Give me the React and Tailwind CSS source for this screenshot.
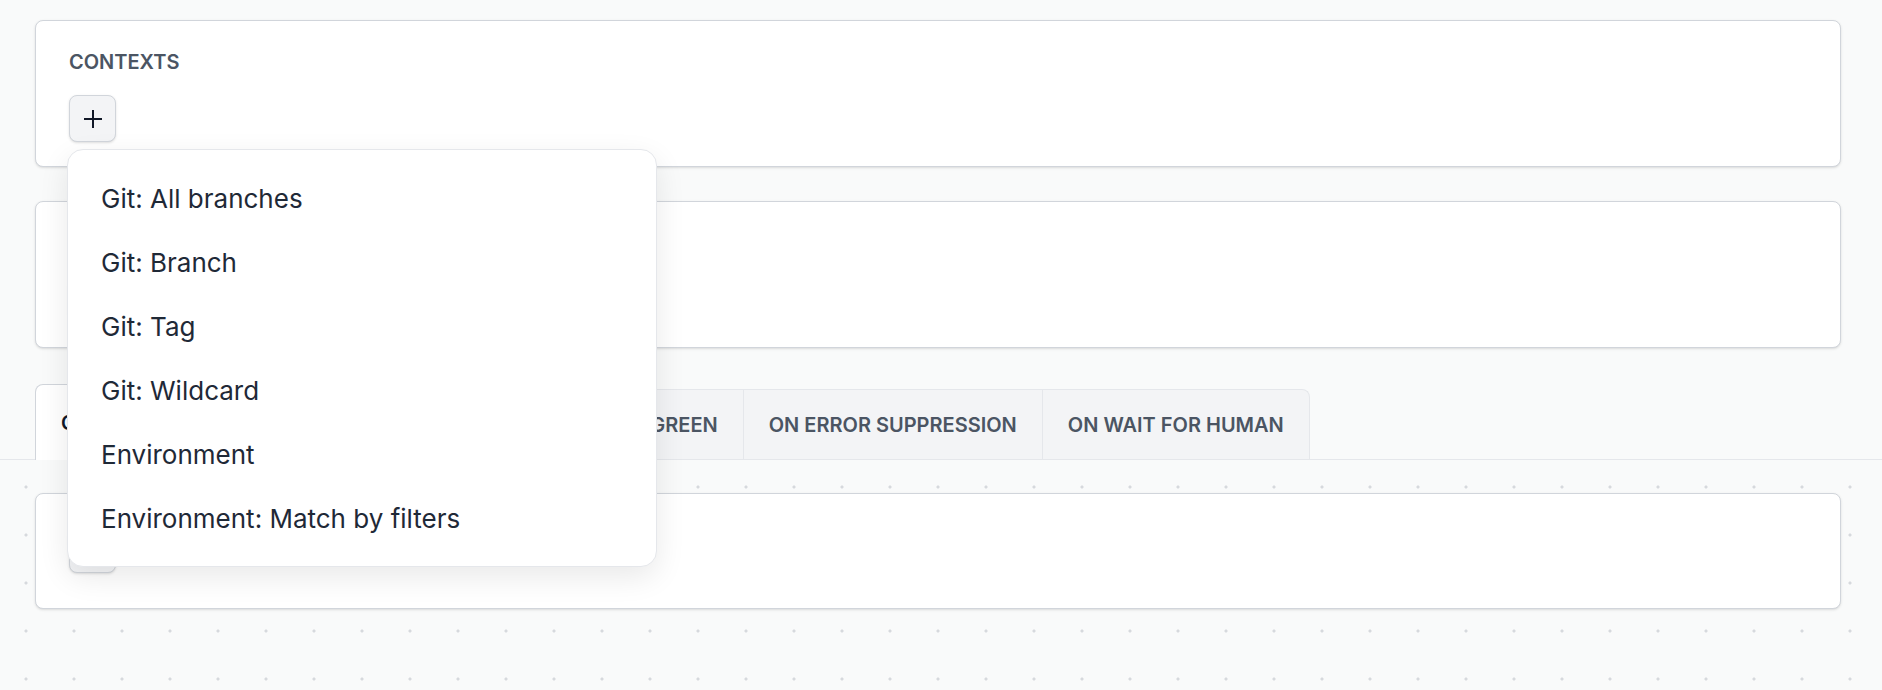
import React from 'react';

const menuItems = [
  'Git: All branches',
  'Git: Branch',
  'Git: Tag',
  'Git: Wildcard',
  'Environment',
  'Environment: Match by filters',
];

const tabs = [
  { label: 'CONDITIONS', active: true },
  { label: 'ON TURNED RED' },
  { label: 'ON TURNED GREEN' },
  { label: 'ON ERROR SUPPRESSION' },
  { label: 'ON WAIT FOR HUMAN' },
];

// Bouton "+" carré utilisé dans chaque carte
const AddButton = () => (
  <button className="flex h-[47px] w-[47px] items-center justify-center rounded-[8px] border border-[#d1d5db] bg-[#f3f4f6] shadow-sm">
    <svg width="18" height="18" viewBox="0 0 18 18" fill="none" stroke="#111827" strokeWidth="2" strokeLinecap="square">
      <line x1="9" y1="1" x2="9" y2="17" />
      <line x1="1" y1="9" x2="17" y2="9" />
    </svg>
  </button>
);

const Card = ({ label }) => (
  <div className="h-[147px] rounded-[8px] border border-[#d1d5db] bg-white px-[33px] pt-[27px] shadow-sm">
    <div className="h-[28px] text-[20px] font-semibold leading-[28px] text-[#4b5563]">{label}</div>
    <div className="mt-[19px]">
      <AddButton />
    </div>
  </div>
);

export default function App() {
  return (
    <div className="relative flex min-h-screen flex-col bg-[#f9fafa] font-['Inter',sans-serif]">
      {/* Cartes du haut */}
      <div className="flex flex-col gap-[34px] pl-[35px] pr-[41px] pt-[20px]">
        <Card label="CONTEXTS" />
        <Card label="" />
      </div>

      {/* Onglets */}
      <div className="mt-[36px] flex items-end border-b border-[#e5e7eb] pl-[35px]">
        {tabs.map((tab, i) =>
          tab.active ? (
            <div
              key={tab.label}
              className="-mb-px flex h-[76px] w-[253px] items-center rounded-t-[8px] border border-b-0 border-[#d1d5db] bg-white px-[25px] text-[20px] font-semibold text-[#111827]"
            >
              {tab.label}
            </div>
          ) : (
            <div
              key={tab.label}
              className={`flex h-[70px] items-center border-t border-[#e5e7eb] bg-[#f3f4f6] px-[25px] text-[20px] font-semibold text-[#4b5563] ${
                i > 1 ? 'border-l' : ''
              } ${i === tabs.length - 1 ? 'rounded-tr-[8px] border-r' : ''}`}
            >
              {tab.label}
            </div>
          )
        )}
      </div>

      {/* Zone à points */}
      <div className="flex-1 bg-[radial-gradient(circle,#d6d9dd_1.3px,transparent_1.8px)] bg-[length:48px_48px] bg-[position:2px_3px] pl-[35px] pr-[41px] pt-[33px]">
        <div className="rounded-[8px] border border-[#d1d5db] bg-white px-[33px] pb-[35px] pt-[32px] shadow-sm">
          <AddButton />
        </div>
      </div>

      {/* Menu déroulant ouvert */}
      <div className="absolute left-[67px] top-[149px] w-[590px] rounded-[16px] border border-[#e5e7eb] bg-white py-[16px] shadow-[0_10px_30px_rgba(0,0,0,0.09)]">
        {menuItems.map((item) => (
          <div key={item} className="flex h-[64px] items-center px-[33px] text-[26px] text-[#1f2937]">
            {item}
          </div>
        ))}
      </div>
    </div>
  );
}
